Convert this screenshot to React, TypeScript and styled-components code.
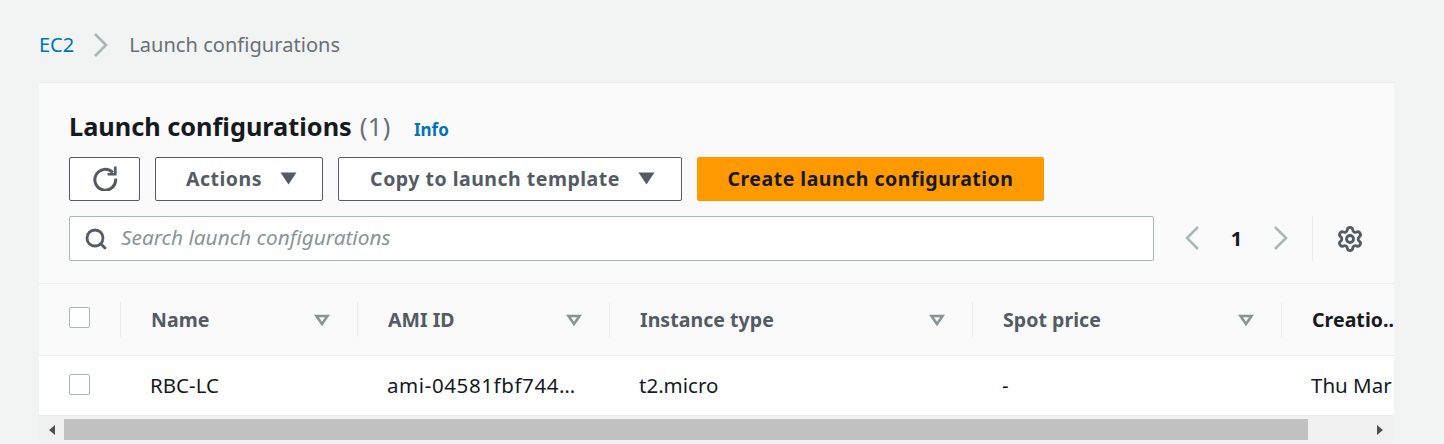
import React from "react";
import styled, { createGlobalStyle } from "styled-components";
import { Search, Settings } from "lucide-react";

const Global = createGlobalStyle`
  html, body { margin: 0; padding: 0; background: #f2f3f3; }
  body { font-family: "Noto Sans", "Open Sans", sans-serif; width: 1444px; height: 444px; overflow: hidden; }
`;

const Page = styled.div`
  display: flex;
  flex-direction: column;
  padding: 0 50px 0 39px;
`;
const Crumbs = styled.nav`
  height: 83px;
  display: flex;
  align-items: center;
  padding-top: 6px;
  box-sizing: border-box;
  font-size: 20px;
`;
const CrumbLink = styled.span`color: #0073bb;`;
const CrumbSep = styled.span`
  display: flex;
  margin: 0 20px 0 19px;
`;
const CrumbCurrent = styled.span`
  color: #687078;
  letter-spacing: 0.05px;
`;
const Panel = styled.section`
  background: #fff;
  box-shadow: 0 -1px 0 #eaeded;
  display: flex;
  flex-direction: column;
  overflow: hidden;
`;
const Header = styled.header`
  background: #fafafa;
  padding: 27px 0 22px 30px;
  border-bottom: 1px solid #eaeded;
  display: flex;
  flex-direction: column;
`;
const TitleRow = styled.div`
  height: 34px;
  display: flex;
  align-items: center;
  margin-bottom: 13px;
`;
const Title = styled.h1`
  margin: 0;
  font-size: 25.3px;
  line-height: 32px;
  margin-top: -2px;
  font-weight: 700;
  color: #16191f;
`;
const Count = styled.span`
  font-weight: 400;
  color: #687078;
  margin-left: 8px;
  letter-spacing: 0.5px;
`;
const Info = styled.a`
  font-size: 17px;
  font-weight: 700;
  color: #0073bb;
  margin-left: 23px;
  padding-top: 5px;
`;
const Toolbar = styled.div`
  display: flex;
  gap: 15px;
  margin-bottom: 15px;
`;
const Button = styled.button<{ $w: number; $primary?: boolean }>`
  width: ${(p) => p.$w}px;
  height: 44px;
  box-sizing: border-box;
  display: flex;
  align-items: center;
  justify-content: center;
  gap: 18px;
  border-radius: 2px;
  border: 1px solid ${(p) => (p.$primary ? "#ff9900" : "#545b64")};
  background: ${(p) => (p.$primary ? "#ff9900" : "#fff")};
  color: ${(p) => (p.$primary ? "#16191f" : "#545b64")};
  font-family: inherit;
  font-size: 19.5px;
  font-weight: 700;
  letter-spacing: 0.5px;
  padding: 0 0 2px;
`;
const MenuButton = styled(Button)`
  padding-left: 5px;
`;
const SearchRow = styled.div`
  display: flex;
  align-items: stretch;
`;
const SearchBox = styled.div`
  width: 1085px;
  height: 45px;
  box-sizing: border-box;
  border: 1px solid #aab7b8;
  border-radius: 2px;
  background: #fff;
  display: flex;
  align-items: center;
  gap: 13px;
  padding-left: 14px;
  color: #545b64;
`;
const Placeholder = styled.span`
  font-size: 20.8px;
  font-style: italic;
  color: #879596;
  padding-bottom: 3px;
`;
const Pager = styled.div`
  display: flex;
  align-items: center;
  margin-left: 30px;
  width: 105px;
  justify-content: space-between;
  padding-bottom: 1px;
`;
const PageNum = styled.span`
  font-size: 20px;
  font-weight: 700;
  color: #16191f;
`;
const PrefsDivider = styled.div`
  width: 1px;
  margin-left: 23px;
  background: #eaeded;
`;
const Prefs = styled.div`
  display: flex;
  align-items: center;
  margin-left: 23px;
  color: #545b64;
`;
const Grid = "81px 237px 252px 363px 309px 200px";
const HeadRow = styled.div`
  display: grid;
  grid-template-columns: ${Grid};
  height: 71px;
  align-items: center;
  background: #fafafa;
  border-bottom: 1px solid #eaeded;
`;
const HeadCell = styled.div<{ $active?: boolean }>`
  height: 35px;
  box-sizing: border-box;
  display: flex;
  align-items: center;
  justify-content: space-between;
  padding: 0 27px 0 30px;
  font-size: 19.5px;
  letter-spacing: 0.05px;
  font-weight: 700;
  color: ${(p) => (p.$active ? "#16191f" : "#545b64")};
  border-left: 1px solid #eaeded;
`;
const CheckCell = styled.div`
  padding-left: 30px;
  display: flex;
  margin-top: -4px;
`;
const RowCheckCell = styled(CheckCell)`
  margin-top: -2px;
`;
const Box = styled.span`
  width: 21px;
  height: 21px;
  box-sizing: border-box;
  background: #fff;
  border: 1px solid #aab7b8;
  border-radius: 2px;
  display: block;
`;
const BodyRow = styled.div`
  display: grid;
  grid-template-columns: ${Grid};
  height: 59px;
  align-items: center;
  background: #fff;
  border-bottom: 1px solid #eaeded;
`;
const Cell = styled.div`
  font-size: 20.5px;
  line-height: 28px;
  color: #16191f;
  padding: 0 0 1px 30px;
  white-space: nowrap;
  overflow: hidden;
`;
const Clipped = styled(Cell)`
  padding-right: 30px;
  letter-spacing: 0.6px;
  text-overflow: ellipsis;
`;
const Scrollbar = styled.div`
  height: 25px;
  background: #f1f1f1;
  display: flex;
  align-items: flex-start;
  padding-top: 3px;
  box-sizing: border-box;
`;
const Arrow = styled.span<{ $dir: "l" | "r" }>`
  width: 25px;
  height: 21px;
  display: flex;
  align-items: center;
  justify-content: center;
  flex: none;
  &::before {
    content: "";
    border-style: solid;
    border-width: 5px 0 5px 6px;
    border-color: transparent transparent transparent #505050;
    transform: ${(p) => (p.$dir === "l" ? "rotate(180deg)" : "none")};
  }
`;
const Thumb = styled.div`
  width: 1244px;
  height: 21px;
  background: #c1c1c1;
`;
const ScrollGap = styled.div`flex: 1;`;
const RightArrowWrap = styled.div`flex: none; margin-right: 2px;`;

const SortIcon = () => (
  <svg width="16" height="12" viewBox="0 0 16 12">
    <path d="M2.5 2 H13.5 L8 10 Z" fill="none" stroke="#879596" strokeWidth="2.6" />
  </svg>
);
const Caret = () => (
  <svg width="17" height="13" viewBox="0 0 17 13">
    <path d="M0.5 0.5 H16.5 L8.5 12.5 Z" fill="#545b64" />
  </svg>
);
const Refresh = () => (
  <svg width="26" height="26" viewBox="0 0 26 26">
    <path d="M20.8 7.6 A10.4 10.4 0 1 0 23.6 13.6" fill="none" stroke="#545b64" strokeWidth="3" />
    <path d="M24.6 1.6 V10.6 H15.6 V8 H22 V1.6 Z" fill="#545b64" />
  </svg>
);
const Chevron = ({ left }: { left?: boolean }) => (
  <svg width="16" height="26" viewBox="0 0 16 26">
    <path d={left ? "M14 2 L3 13 L14 24" : "M2 2 L13 13 L2 24"} fill="none" stroke="#aab7b8" strokeWidth="2.6" />
  </svg>
);

const columns = ["Name", "AMI ID", "Instance type", "Spot price"];

export default function App() {
  return (
    <Page>
      <Global />
      <Crumbs>
        <CrumbLink>EC2</CrumbLink>
        <CrumbSep><Chevron /></CrumbSep>
        <CrumbCurrent>Launch configurations</CrumbCurrent>
      </Crumbs>
      <Panel>
        <Header>
          <TitleRow>
            <Title>Launch configurations<Count>(1)</Count></Title>
            <Info>Info</Info>
          </TitleRow>
          <Toolbar>
            <Button $w={71} aria-label="Refresh"><Refresh /></Button>
            <MenuButton $w={168}>Actions<Caret /></MenuButton>
            <MenuButton $w={344}>Copy to launch template<Caret /></MenuButton>
            <Button $w={347} $primary>Create launch configuration</Button>
          </Toolbar>
          <SearchRow>
            <SearchBox>
              <Search size={24} strokeWidth={2.8} />
              <Placeholder>Search launch configurations</Placeholder>
            </SearchBox>
            <Pager>
              <Chevron left />
              <PageNum>1</PageNum>
              <Chevron />
            </Pager>
            <PrefsDivider />
            <Prefs><Settings size={28} strokeWidth={2.4} /></Prefs>
          </SearchRow>
        </Header>
        <HeadRow>
          <CheckCell><Box /></CheckCell>
          {columns.map((c) => (
            <HeadCell key={c}>{c}<SortIcon /></HeadCell>
          ))}
          <HeadCell $active>Creatio...</HeadCell>
        </HeadRow>
        <BodyRow>
          <RowCheckCell><Box /></RowCheckCell>
          <Cell>RBC-LC</Cell>
          <Clipped>ami-04581fbf744a1c2d3</Clipped>
          <Cell>t2.micro</Cell>
          <Cell>-</Cell>
          <Cell>Thu Mar 11 2021</Cell>
        </BodyRow>
        <Scrollbar>
          <Arrow $dir="l" />
          <Thumb />
          <ScrollGap />
          <RightArrowWrap><Arrow $dir="r" /></RightArrowWrap>
        </Scrollbar>
      </Panel>
    </Page>
  );
}
